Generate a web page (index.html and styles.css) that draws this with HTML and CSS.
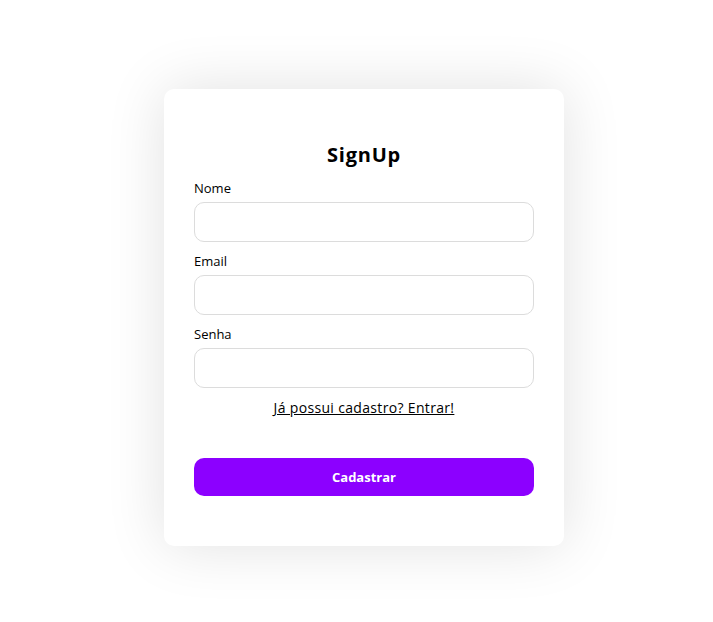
FILE: index.html
```html
<!DOCTYPE html>
<html lang="pt-BR">
<head>
<meta charset="utf-8">
<title>SignUp</title>
<link rel="stylesheet" href="styles.css">
</head>
<body>
<main class="page">
  <form class="card">
    <h1 class="title">SignUp</h1>
    <label class="field">
      <span class="label">Nome</span>
      <input class="input" type="text">
    </label>
    <label class="field">
      <span class="label">Email</span>
      <input class="input" type="email">
    </label>
    <label class="field">
      <span class="label">Senha</span>
      <input class="input" type="password">
    </label>
    <a class="link" href="#">Já possui cadastro? Entrar!</a>
    <button class="button" type="button">Cadastrar</button>
  </form>
</main>
</body>
</html>
```
FILE: styles.css
```css
* { box-sizing: border-box; }
html, body { margin: 0; padding: 0; background: #ffffff; }
body { font-family: "Open Sans", "Noto Sans", sans-serif; color: #000; }
.page {
  height: 622px;
  display: flex;
  align-items: center;
  justify-content: center;
  padding: 13px 0 0 15px;
}
.card {
  width: 400px;
  height: 457px;
  background: #fff;
  border-radius: 10px;
  box-shadow: 0 0 60px rgba(0, 0, 0, 0.12);
  padding: 52px 30px 50px;
  display: flex;
  flex-direction: column;
}
.title {
  margin: 0 0 10px;
  font-size: 20px;
  line-height: 28px;
  font-weight: 700;
  letter-spacing: 0.8px;
  text-align: center;
}
.field {
  display: flex;
  flex-direction: column;
  gap: 5px;
  margin-bottom: 10px;
}
.label {
  font-size: 13px;
  line-height: 18px;
  font-weight: 500;
}
.input {
  height: 40px;
  width: 100%;
  border: 1px solid #dcdcdc;
  border-radius: 10px;
  background: #fff;
  font: inherit;
  outline: none;
}
.link {
  align-self: center;
  font-size: 14px;
  line-height: 20px;
  letter-spacing: 0.33px;
  color: #000;
  text-decoration: underline;
  margin-bottom: 40px;
}
.button {
  height: 38px;
  width: 100%;
  border: none;
  border-radius: 10px;
  background: #8c00ff;
  color: #fff;
  font-family: inherit;
  font-size: 13px;
  font-weight: 700;
  cursor: pointer;
}
```
